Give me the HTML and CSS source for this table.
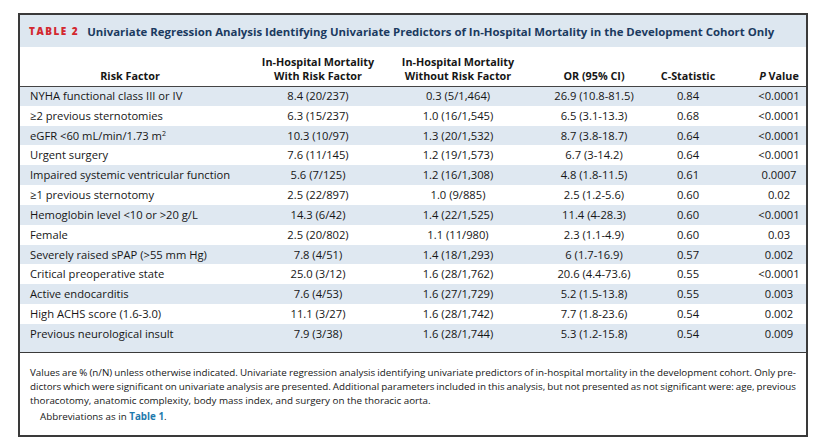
FILE: index.html
```html
<!DOCTYPE html>
<html lang="en">
<head>
<meta charset="utf-8">
<title>Table 2</title>
<link rel="stylesheet" href="styles.css">
</head>
<body>
<div class="card">
  <div class="caption">
    <span class="label">TABLE 2</span>
    <span class="caption-text">Univariate Regression Analysis Identifying Univariate Predictors of In-Hospital Mortality in the Development Cohort Only</span>
  </div>
  <div class="table-wrap">
    <table class="data">
      <colgroup>
        <col class="c-risk">
        <col class="c-with">
        <col class="c-without">
        <col class="c-or">
        <col class="c-cstat">
        <col class="c-p">
      </colgroup>
      <thead>
        <tr>
          <th class="h-risk">Risk Factor</th>
          <th>In-Hospital Mortality<br>With Risk Factor</th>
          <th>In-Hospital Mortality<br>Without Risk Factor</th>
          <th class="col-or">OR (95% CI)</th>
          <th>C-Statistic</th>
          <th class="col-p"><i>P</i> Value</th>
        </tr>
      </thead>
      <tbody>
        <tr class="shade"><td>NYHA functional class III or IV</td><td>8.4 (20/237)</td><td>0.3 (5/1,464)</td><td class="col-or">26.9 (10.8-81.5)</td><td>0.84</td><td class="col-p">&lt;0.0001</td></tr>
        <tr><td>≥2 previous sternotomies</td><td>6.3 (15/237)</td><td>1.0 (16/1,545)</td><td class="col-or">6.5 (3.1-13.3)</td><td>0.68</td><td class="col-p">&lt;0.0001</td></tr>
        <tr class="shade"><td>eGFR &lt;60 mL/min/1.73 m<sup>2</sup></td><td>10.3 (10/97)</td><td>1.3 (20/1,532)</td><td class="col-or">8.7 (3.8-18.7)</td><td>0.64</td><td class="col-p">&lt;0.0001</td></tr>
        <tr><td>Urgent surgery</td><td>7.6 (11/145)</td><td>1.2 (19/1,573)</td><td class="col-or">6.7 (3-14.2)</td><td>0.64</td><td class="col-p">&lt;0.0001</td></tr>
        <tr class="shade"><td>Impaired systemic ventricular function</td><td>5.6 (7/125)</td><td>1.2 (16/1,308)</td><td class="col-or">4.8 (1.8-11.5)</td><td>0.61</td><td class="col-p">0.0007</td></tr>
        <tr><td>≥1 previous sternotomy</td><td>2.5 (22/897)</td><td>1.0 (9/885)</td><td class="col-or">2.5 (1.2-5.6)</td><td>0.60</td><td class="col-p">0.02</td></tr>
        <tr class="shade"><td>Hemoglobin level &lt;10 or &gt;20 g/L</td><td>14.3 (6/42)</td><td>1.4 (22/1,525)</td><td class="col-or">11.4 (4-28.3)</td><td>0.60</td><td class="col-p">&lt;0.0001</td></tr>
        <tr><td>Female</td><td>2.5 (20/802)</td><td>1.1 (11/980)</td><td class="col-or">2.3 (1.1-4.9)</td><td>0.60</td><td class="col-p">0.03</td></tr>
        <tr class="shade"><td>Severely raised sPAP (&gt;55 mm Hg)</td><td>7.8 (4/51)</td><td>1.4 (18/1,293)</td><td class="col-or">6 (1.7-16.9)</td><td>0.57</td><td class="col-p">0.002</td></tr>
        <tr><td>Critical preoperative state</td><td>25.0 (3/12)</td><td>1.6 (28/1,762)</td><td class="col-or">20.6 (4.4-73.6)</td><td>0.55</td><td class="col-p">&lt;0.0001</td></tr>
        <tr class="shade"><td>Active endocarditis</td><td>7.6 (4/53)</td><td>1.6 (27/1,729)</td><td class="col-or">5.2 (1.5-13.8)</td><td>0.55</td><td class="col-p">0.003</td></tr>
        <tr><td>High ACHS score (1.6-3.0)</td><td>11.1 (3/27)</td><td>1.6 (28/1,742)</td><td class="col-or">7.7 (1.8-23.6)</td><td>0.54</td><td class="col-p">0.002</td></tr>
        <tr class="shade"><td>Previous neurological insult</td><td>7.9 (3/38)</td><td>1.6 (28/1,744)</td><td class="col-or">5.3 (1.2-15.8)</td><td>0.54</td><td class="col-p">0.009</td></tr>
      </tbody>
    </table>
  </div>
  <div class="notes">
    <div class="jline">Values are % (n/N) unless otherwise indicated. Univariate regression analysis identifying univariate predictors of in-hospital mortality in the development cohort. Only pre-</div>
    <div class="jline">dictors which were significant on univariate analysis are presented. Additional parameters included in this analysis, but not presented as not significant were: age, previous</div>
    <div class="lline">thoracotomy, anatomic complexity, body mass index, and surgery on the thoracic aorta.</div>
    <div class="abbr">Abbreviations as in <a class="ref" href="#">Table 1</a>.</div>
  </div>
</div>
</body>
</html>
```
FILE: styles.css
```css
* { box-sizing: border-box; }

body {
  margin: 0;
  background: #ffffff;
  font-family: "Open Sans", "Noto Sans", sans-serif;
  color: #161616;
}

.card {
  margin: 13px 0 0 18px;
  width: 790px;
  height: 424px;
  border: 2px solid #3a3a3a;
  display: flex;
  flex-direction: column;
}

.caption {
  height: 32px;
  background: #dde7f0;
  display: flex;
  align-items: center;
  padding-left: 9px;
  gap: 8px;
  white-space: nowrap;
}

.label {
  color: #d3282f;
  font-weight: 800;
  font-size: 10px;
  letter-spacing: 1.5px;
}

.caption-text {
  color: #1b3a5f;
  font-weight: 700;
  font-size: 11.4px;
}

.table-wrap {
  background: #dfe8f1;
  padding-bottom: 8px;
  border-bottom: 1px solid #3a3a3a;
}

.data {
  width: 786px;
  border-collapse: collapse;
  table-layout: fixed;
  font-size: 11.2px;
}

.c-risk { width: 228px; }
.c-with { width: 140px; }
.c-without { width: 140px; }
.c-or { width: 129px; }
.c-cstat { width: 62px; }
.c-p { width: 87px; }

.data thead tr {
  background: #ffffff;
  height: 39px;
}

.data th {
  font-weight: 700;
  font-size: 10.8px;
  line-height: 14px;
  vertical-align: bottom;
  text-align: center;
  padding: 0 0 3px 0;
  white-space: nowrap;
  border-bottom: 1px solid #444;
}

.data th.h-risk { padding-right: 8px; }

.data tbody tr {
  height: 19.83px;
  background: #ffffff;
}

.data tbody tr.shade { background: #dfe8f1; }

.data td {
  padding: 0;
  text-align: center;
  vertical-align: middle;
  white-space: nowrap;
  line-height: 14px;
}

.data td:first-child {
  text-align: left;
  padding-left: 10px;
}

.data .col-or { padding-left: 3px; }
.data .col-p { padding-left: 33px; }

sup {
  font-size: 7px;
  line-height: 0;
  vertical-align: 4px;
}

.notes {
  padding: 13px 10px 0 10px;
  font-size: 9.8px;
  line-height: 14px;
}

.jline {
  text-align: justify;
  text-align-last: justify;
  white-space: nowrap;
  word-spacing: -1.5px;
}

.lline { white-space: nowrap; }

.abbr {
  margin-top: 2px;
  padding-left: 10px;
}

.ref {
  color: #1f7aad;
  font-weight: 700;
  text-decoration: none;
}
```
